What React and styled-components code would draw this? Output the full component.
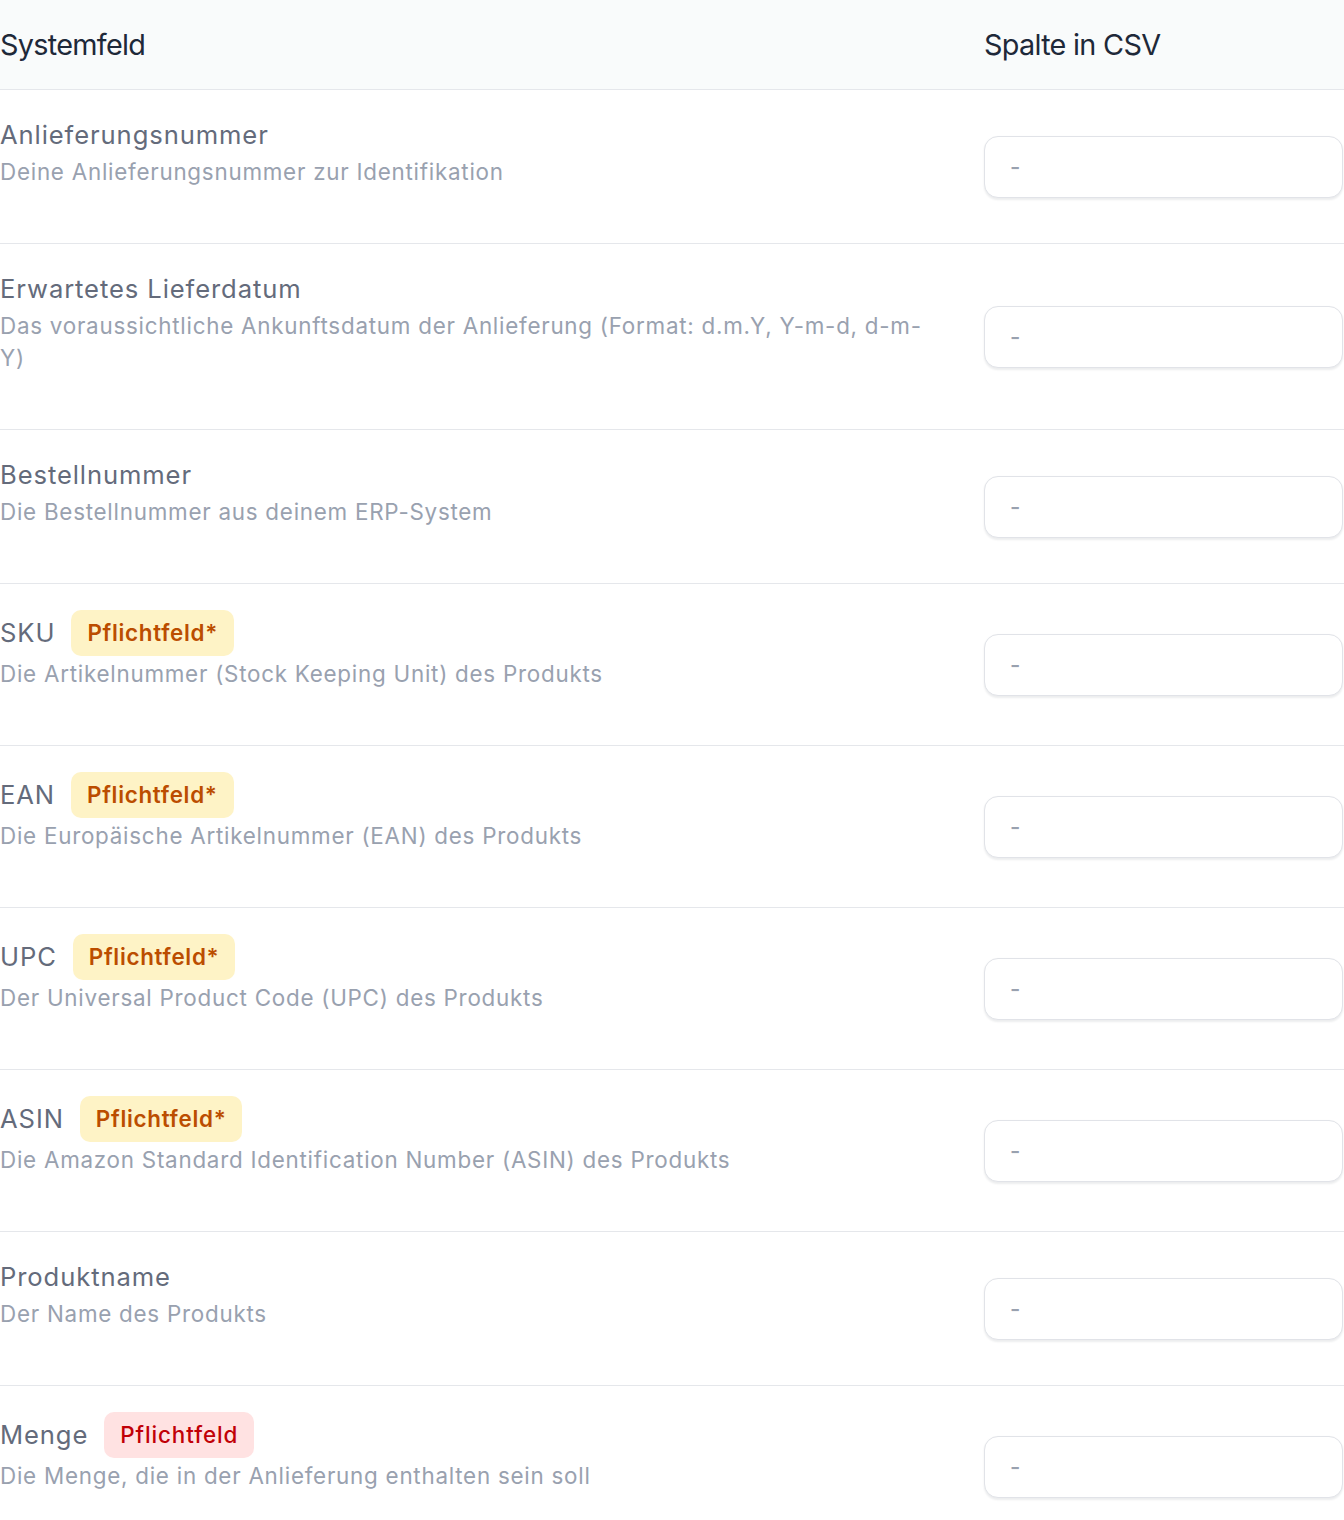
import React from "react";
import styled, { createGlobalStyle } from "styled-components";

const GlobalStyle = createGlobalStyle`
  html, body {
    margin: 0;
    padding: 0;
    background: #ffffff;
  }
  body {
    font-family: Inter, "Noto Sans", "Liberation Sans", sans-serif;
    -webkit-font-smoothing: antialiased;
  }
`;

const Table = styled.div`
  width: 1344px;
  overflow: hidden;
`;

const HeaderRow = styled.div`
  display: grid;
  grid-template-columns: 1fr 360px;
  height: 89px;
  align-items: center;
  background: #f9fbfb;
  border-bottom: 1px solid #e5e7eb;
`;

const HeaderCell = styled.div`
  font-size: 28.8px;
  line-height: 40px;
  letter-spacing: -0.7px;
  font-weight: 400;
  color: #1e2939;
`;

const Row = styled.div`
  display: grid;
  grid-template-columns: 1fr 360px;
  align-items: center;
  border-bottom: 1px solid #e5e7eb;
`;

const FieldCell = styled.div`
  padding: 26px 44px 55px 0;
  align-self: stretch;
`;

const TitleLine = styled.div`
  display: flex;
  align-items: center;
  gap: 16px;
  min-height: 38px;
`;

const Title = styled.span`
  font-size: 25.6px;
  line-height: 38px;
  letter-spacing: 0.9px;
  color: #646b7b;
`;

const Badge = styled.span`
  display: inline-flex;
  align-items: center;
  padding: 7px 16px;
  border-radius: 10px;
  font-size: 22.4px;
  line-height: 32px;
  letter-spacing: ${(p) => (p.$tone === "red" ? "0.9px" : "0.7px")};
  font-weight: ${(p) => (p.$tone === "red" ? 500 : 600)};
  background: ${(p) => (p.$tone === "red" ? "#ffe2e2" : "#fef3c6")};
  color: ${(p) => (p.$tone === "red" ? "#c10007" : "#bb4d00")};
`;

const Description = styled.div`
  margin-top: 2px;
  font-size: 22.4px;
  line-height: 32px;
  letter-spacing: 0.75px;
  color: #99a1af;
`;

const MappingCell = styled.div`
  display: flex;
  align-items: center;
`;

const ColumnInput = styled.div`
  box-sizing: border-box;
  width: 359px;
  height: 62px;
  display: flex;
  align-items: center;
  padding-left: 25px;
  border: 1.5px solid #e1e3e8;
  border-radius: 14px;
  background: #ffffff;
  box-shadow: 0 1.5px 2px rgba(17, 24, 39, 0.08);
  font-size: 22.4px;
  font-weight: 500;
  color: #99a1af;
`;

const fields = [
  {
    title: "Anlieferungsnummer",
    description: "Deine Anlieferungsnummer zur Identifikation",
  },
  {
    title: "Erwartetes Lieferdatum",
    description:
      "Das voraussichtliche Ankunftsdatum der Anlieferung (Format: d.m.Y, Y-m-d, d-m-Y)",
  },
  {
    title: "Bestellnummer",
    description: "Die Bestellnummer aus deinem ERP-System",
  },
  {
    title: "SKU",
    badge: "amber",
    description: "Die Artikelnummer (Stock Keeping Unit) des Produkts",
  },
  {
    title: "EAN",
    badge: "amber",
    description: "Die Europäische Artikelnummer (EAN) des Produkts",
  },
  {
    title: "UPC",
    badge: "amber",
    description: "Der Universal Product Code (UPC) des Produkts",
  },
  {
    title: "ASIN",
    badge: "amber",
    description:
      "Die Amazon Standard Identification Number (ASIN) des Produkts",
  },
  {
    title: "Produktname",
    description: "Der Name des Produkts",
  },
  {
    title: "Menge",
    badge: "red",
    description: "Die Menge, die in der Anlieferung enthalten sein soll",
  },
];

export default function App() {
  return (
    <>
      <GlobalStyle />
      <Table>
        <HeaderRow>
          <HeaderCell>Systemfeld</HeaderCell>
          <HeaderCell>Spalte in CSV</HeaderCell>
        </HeaderRow>
        {fields.map((f) => (
          <Row key={f.title}>
            <FieldCell>
              <TitleLine>
                <Title>{f.title}</Title>
                {f.badge && (
                  <Badge $tone={f.badge}>
                    {f.badge === "red" ? "Pflichtfeld" : "Pflichtfeld*"}
                  </Badge>
                )}
              </TitleLine>
              <Description>{f.description}</Description>
            </FieldCell>
            <MappingCell>
              <ColumnInput>-</ColumnInput>
            </MappingCell>
          </Row>
        ))}
      </Table>
    </>
  );
}
